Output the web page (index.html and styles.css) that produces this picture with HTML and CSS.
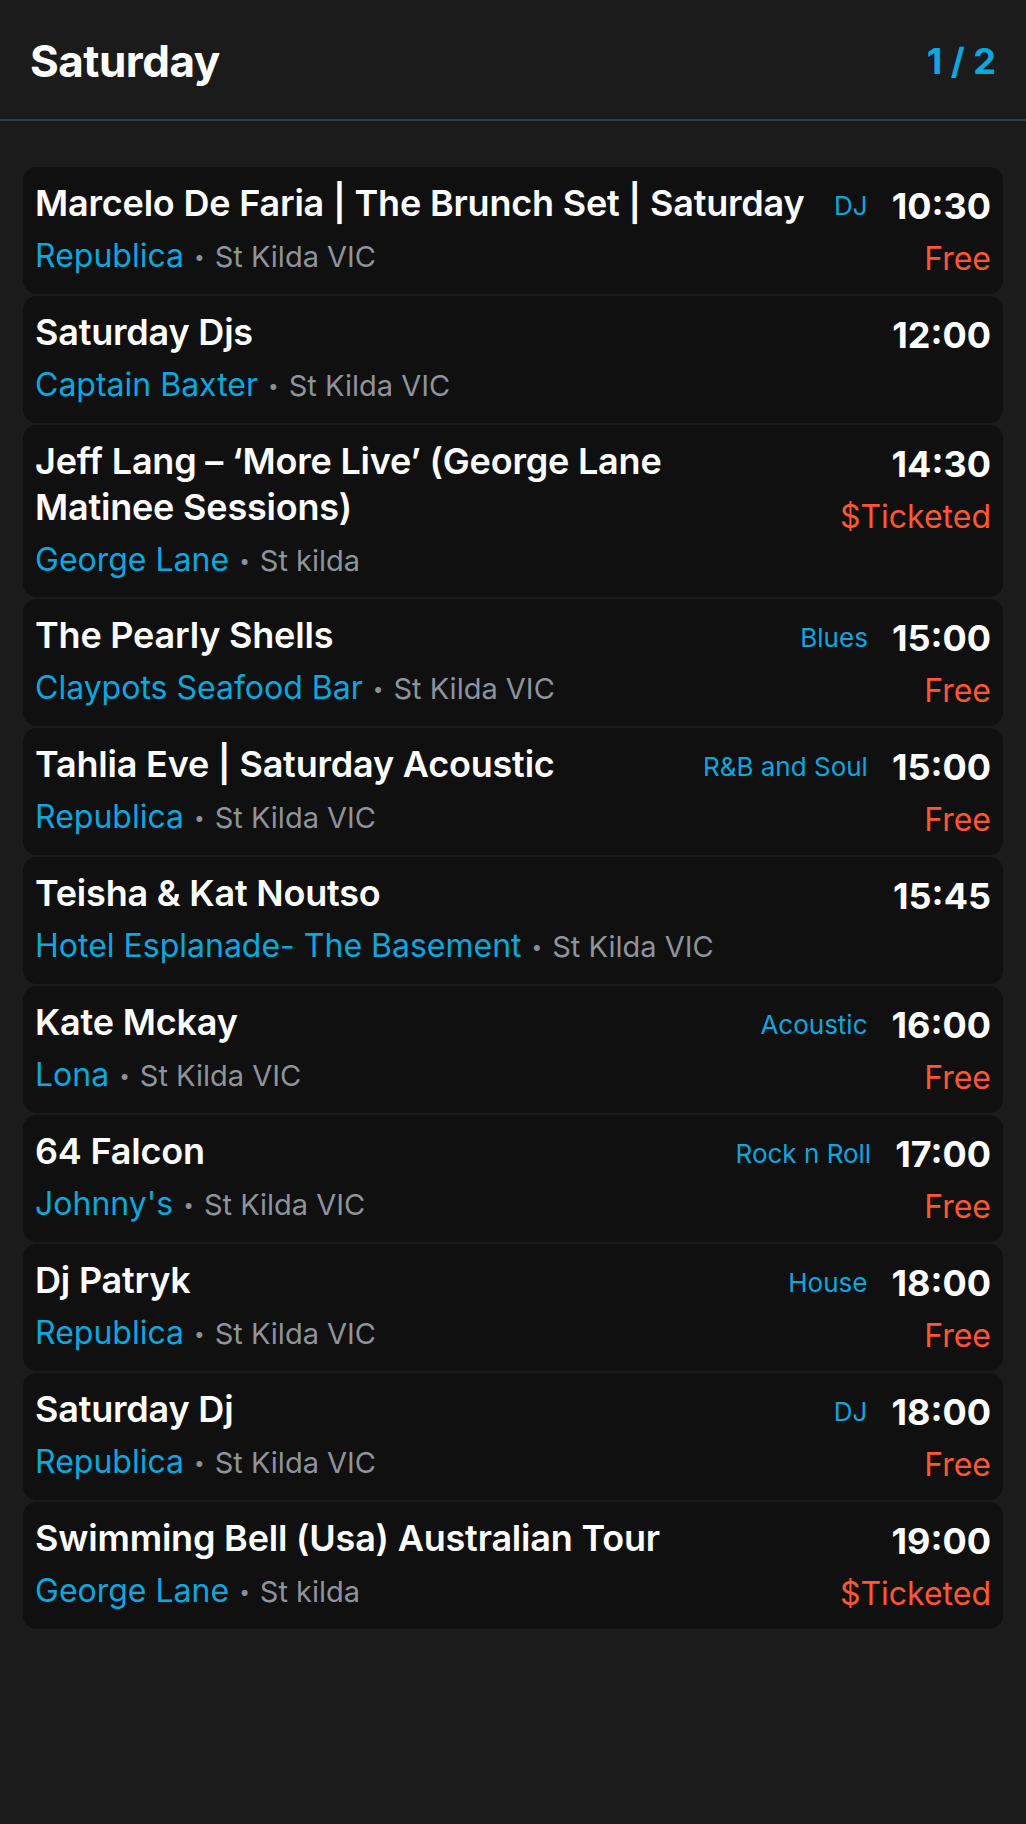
FILE: index.html
```html
<!DOCTYPE html>
<html lang="en">
<head>
<meta charset="utf-8">
<title>Saturday</title>
<link rel="stylesheet" href="styles.css">
</head>
<body>
<header class="top">
  <h1 class="day">Saturday</h1>
  <div class="pager">1 / 2</div>
</header>
<main class="list">
  <article class="card">
    <div class="main"><div class="title">Marcelo De Faria | The Brunch Set | Saturday</div><div class="venue"><span class="vname">Republica</span><span class="dot">•</span><span class="loc">St Kilda VIC</span></div></div>
    <div class="tag">DJ</div>
    <div class="side"><div class="time">10:30</div><div class="price">Free</div></div>
  </article>
  <article class="card">
    <div class="main"><div class="title">Saturday Djs</div><div class="venue"><span class="vname">Captain Baxter</span><span class="dot">•</span><span class="loc">St Kilda VIC</span></div></div>
    <div class="side"><div class="time">12:00</div></div>
  </article>
  <article class="card">
    <div class="main"><div class="title">Jeff Lang – ‘More Live’ (George Lane Matinee&nbsp;Sessions)</div><div class="venue"><span class="vname">George Lane</span><span class="dot">•</span><span class="loc">St kilda</span></div></div>
    <div class="side"><div class="time">14:30</div><div class="price">$Ticketed</div></div>
  </article>
  <article class="card">
    <div class="main"><div class="title">The Pearly Shells</div><div class="venue"><span class="vname">Claypots Seafood Bar</span><span class="dot">•</span><span class="loc">St Kilda VIC</span></div></div>
    <div class="tag">Blues</div>
    <div class="side"><div class="time">15:00</div><div class="price">Free</div></div>
  </article>
  <article class="card">
    <div class="main"><div class="title">Tahlia Eve | Saturday Acoustic</div><div class="venue"><span class="vname">Republica</span><span class="dot">•</span><span class="loc">St Kilda VIC</span></div></div>
    <div class="tag">R&amp;B and Soul</div>
    <div class="side"><div class="time">15:00</div><div class="price">Free</div></div>
  </article>
  <article class="card">
    <div class="main"><div class="title">Teisha &amp; Kat Noutso</div><div class="venue"><span class="vname">Hotel Esplanade- The Basement</span><span class="dot">•</span><span class="loc">St Kilda VIC</span></div></div>
    <div class="side"><div class="time">15:45</div></div>
  </article>
  <article class="card">
    <div class="main"><div class="title">Kate Mckay</div><div class="venue"><span class="vname">Lona</span><span class="dot">•</span><span class="loc">St Kilda VIC</span></div></div>
    <div class="tag">Acoustic</div>
    <div class="side"><div class="time">16:00</div><div class="price">Free</div></div>
  </article>
  <article class="card">
    <div class="main"><div class="title">64 Falcon</div><div class="venue"><span class="vname">Johnny's</span><span class="dot">•</span><span class="loc">St Kilda VIC</span></div></div>
    <div class="tag">Rock n Roll</div>
    <div class="side"><div class="time">17:00</div><div class="price">Free</div></div>
  </article>
  <article class="card">
    <div class="main"><div class="title">Dj Patryk</div><div class="venue"><span class="vname">Republica</span><span class="dot">•</span><span class="loc">St Kilda VIC</span></div></div>
    <div class="tag">House</div>
    <div class="side"><div class="time">18:00</div><div class="price">Free</div></div>
  </article>
  <article class="card">
    <div class="main"><div class="title">Saturday Dj</div><div class="venue"><span class="vname">Republica</span><span class="dot">•</span><span class="loc">St Kilda VIC</span></div></div>
    <div class="tag">DJ</div>
    <div class="side"><div class="time">18:00</div><div class="price">Free</div></div>
  </article>
  <article class="card">
    <div class="main"><div class="title">Swimming Bell (Usa) Australian Tour</div><div class="venue"><span class="vname">George Lane</span><span class="dot">•</span><span class="loc">St kilda</span></div></div>
    <div class="side"><div class="time">19:00</div><div class="price">$Ticketed</div></div>
  </article>
</main>
</body>
</html>
```

FILE: styles.css
```css
* { box-sizing: border-box; }
html, body {
  margin: 0;
  padding: 0;
  background: #1b1b1b;
  font-family: Inter, "Noto Sans", sans-serif;
  color: #ffffff;
}
.top {
  display: flex;
  align-items: center;
  justify-content: space-between;
  padding: 33px 30px 30px 30px;
  border-bottom: 2px solid #353b47;
}
.day {
  margin: 0;
  font-size: 44px;
  line-height: 56px;
  font-weight: 700;
  letter-spacing: -0.5px;
}
.pager {
  font-size: 36px;
  line-height: 44px;
  font-weight: 700;
  color: #0ba7df;
}
.list {
  display: flex;
  flex-direction: column;
  gap: 2px;
  padding: 46px 23px 40px 23px;
}
.card {
  display: flex;
  align-items: flex-start;
  gap: 24px;
  background: #101010;
  border-radius: 14px;
  padding: 13px 12px 13px 12px;
  min-height: 127px;
}
.main {
  flex: 1;
  min-width: 0;
}
.title {
  font-size: 36px;
  line-height: 46px;
  font-weight: 600;
  letter-spacing: -0.2px;
  color: #ffffff;
}
.venue {
  margin-top: 10px;
  margin-bottom: 4px;
  height: 40px;
  line-height: 40px;
  display: flex;
  align-items: baseline;
}
.vname {
  color: #0ba7df;
  font-size: 32px;
}
.dot {
  color: #8a8f98;
  font-size: 19px;
  line-height: 18px;
  margin: 0 10px;
  position: relative;
  top: -3px;
}
.loc {
  color: #8e939c;
  font-size: 29px;
}
.tag {
  font-size: 26px;
  line-height: 52px;
  color: #0ba7df;
  white-space: nowrap;
}
.side {
  display: flex;
  flex-direction: column;
  align-items: flex-end;
}
.time {
  font-size: 36px;
  line-height: 52px;
  font-weight: 700;
}
.price {
  margin-top: 5px;
  font-size: 32px;
  line-height: 44px;
  color: #ff5733;
  white-space: nowrap;
}
```
